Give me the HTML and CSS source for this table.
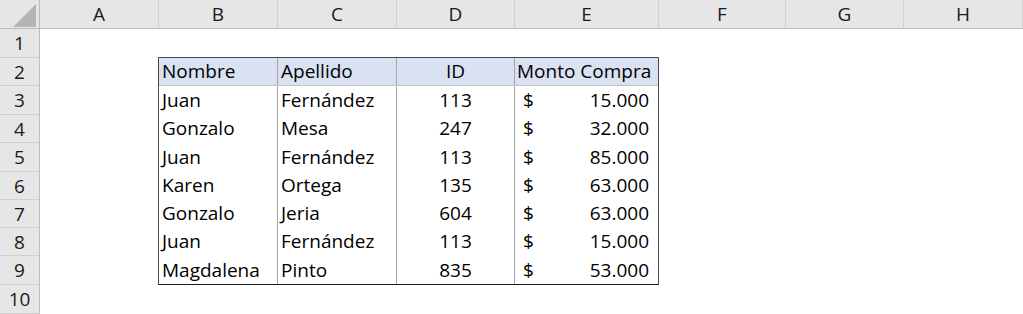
FILE: index.html
```html
<!DOCTYPE html>
<html lang="es">
<head>
<meta charset="utf-8">
<title>Hoja de cálculo</title>
<link rel="stylesheet" href="styles.css">
</head>
<body>
<div class="sheet">
  <div class="col-heads">
    <div class="corner">
      <svg class="tri" width="26" height="26" viewBox="0 0 26 26"><polygon points="24,2 24,25 1,25" fill="#b5b5b5"/></svg>
    </div>
    <div class="ch w119">A</div>
    <div class="ch w119">B</div>
    <div class="ch w119">C</div>
    <div class="ch w118">D</div>
    <div class="ch w144">E</div>
    <div class="ch w127">F</div>
    <div class="ch w118">G</div>
    <div class="ch w119">H</div>
  </div>
  <div class="sheet-body">
    <div class="row-heads">
      <div class="rh h29">1</div>
      <div class="rh h28">2</div>
      <div class="rh h29">3</div>
      <div class="rh h28">4</div>
      <div class="rh h29">5</div>
      <div class="rh h28">6</div>
      <div class="rh h28">7</div>
      <div class="rh h28">8</div>
      <div class="rh h29">9</div>
      <div class="rh h29">10</div>
    </div>
    <div class="cells">
      <div class="row1"></div>
      <div class="data">
        <div class="tr head">
          <div class="td c-b">Nombre</div>
          <div class="td c-c">Apellido</div>
          <div class="td c-d">ID</div>
          <div class="td c-e hdr-e">Monto Compra</div>
        </div>
        <div class="tr r28">
          <div class="td c-b">Juan</div>
          <div class="td c-c">Fernández</div>
          <div class="td c-d">113</div>
          <div class="td c-e money"><span>$</span><span>15.000</span></div>
        </div>
        <div class="tr r29">
          <div class="td c-b">Gonzalo</div>
          <div class="td c-c">Mesa</div>
          <div class="td c-d">247</div>
          <div class="td c-e money"><span>$</span><span>32.000</span></div>
        </div>
        <div class="tr r28">
          <div class="td c-b">Juan</div>
          <div class="td c-c">Fernández</div>
          <div class="td c-d">113</div>
          <div class="td c-e money"><span>$</span><span>85.000</span></div>
        </div>
        <div class="tr r28">
          <div class="td c-b">Karen</div>
          <div class="td c-c">Ortega</div>
          <div class="td c-d">135</div>
          <div class="td c-e money"><span>$</span><span>63.000</span></div>
        </div>
        <div class="tr r28">
          <div class="td c-b">Gonzalo</div>
          <div class="td c-c">Jeria</div>
          <div class="td c-d">604</div>
          <div class="td c-e money"><span>$</span><span>63.000</span></div>
        </div>
        <div class="tr r29">
          <div class="td c-b">Juan</div>
          <div class="td c-c">Fernández</div>
          <div class="td c-d">113</div>
          <div class="td c-e money"><span>$</span><span>15.000</span></div>
        </div>
        <div class="tr r28">
          <div class="td c-b">Magdalena</div>
          <div class="td c-c">Pinto</div>
          <div class="td c-d">835</div>
          <div class="td c-e money"><span>$</span><span>53.000</span></div>
        </div>
      </div>
    </div>
  </div>
</div>
</body>
</html>
```

FILE: styles.css
```css
* { box-sizing: border-box; }
html, body { margin: 0; padding: 0; background: #ffffff; }
body {
  width: 1023px;
  height: 314px;
  overflow: hidden;
  font-family: "Open Sans", "Liberation Sans", sans-serif;
  font-size: 19px;
  color: #000;
}
.sheet { width: 1023px; }

.col-heads {
  display: flex;
  height: 29px;
  background: #e6e6e6;
  border-bottom: 1px solid #bcbcbc;
}
.corner {
  width: 40px;
  border-right: 1px solid #bcbcbc;
  position: relative;
}
.tri { position: absolute; left: 12px; top: 2px; }
.ch {
  border-right: 1px solid #d0d0d0;
  text-align: center;
  line-height: 28px;
  color: #1a1a1a;
}
.w118 { width: 118px; }
.w119 { width: 119px; }
.w127 { width: 127px; }
.w144 { width: 144px; }

.sheet-body { display: flex; }
.row-heads {
  width: 40px;
  background: #e6e6e6;
  border-right: 1px solid #bcbcbc;
}
.rh {
  border-bottom: 1px solid #d0d0d0;
  text-align: center;
  line-height: 28px;
  color: #1a1a1a;
}
.h28 { height: 28px; }
.h29 { height: 29px; }

.cells { flex: 1; }
.row1 { height: 28px; }
.data {
  margin-left: 118px;
  width: 501px;
  border: 1px solid #4a4a4a;
  border-bottom-color: #1e1e1e;
}
.tr { display: flex; }
.tr.head {
  height: 28px;
  background: #d9e1f2;
  border-bottom: 1px solid #c3c3c3;
}
.r28 { height: 28px; }
.r29 { height: 29px; }
.td {
  line-height: 28px;
  white-space: nowrap;
  overflow: hidden;
}
.head .td { line-height: 27px; }
.c-b { width: 119px; padding-left: 3px; border-right: 1px solid #a6a6a6; }
.c-c { width: 119px; padding-left: 3px; border-right: 1px solid #a6a6a6; }
.c-d { width: 118px; text-align: center; border-right: 1px solid #a6a6a6; }
.c-e { width: 143px; }
.hdr-e { padding-left: 2px; }
.money {
  display: flex;
  justify-content: space-between;
  padding-left: 8px;
  padding-right: 9px;
}
```
